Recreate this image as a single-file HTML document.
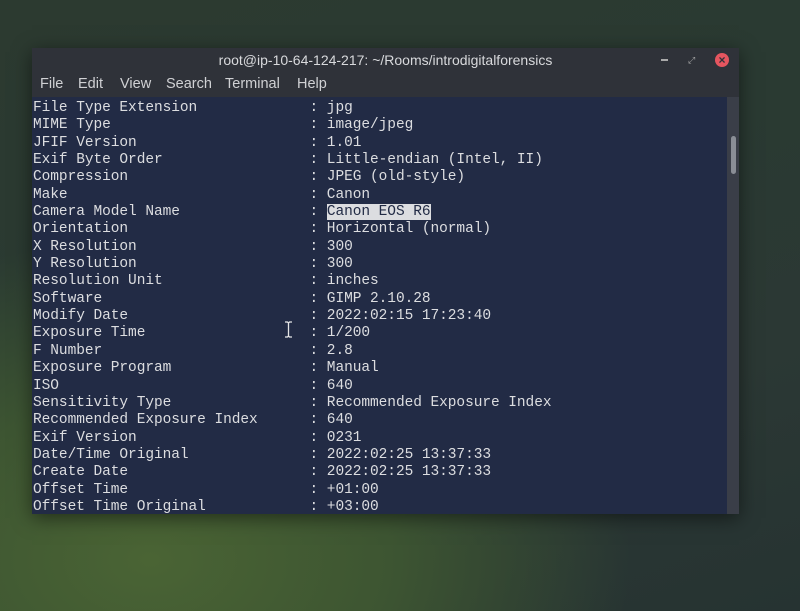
<!DOCTYPE html>
<html><head><style>
html,body{margin:0;padding:0;width:800px;height:611px;overflow:hidden}
body{background:radial-gradient(ellipse 600px 400px at 150px 560px,#4a6434 0%,#3d5532 40%,transparent 80%),linear-gradient(160deg,#2c3a30 0%,#2a3a32 40%,#2b3834 70%,#263332 100%);position:relative;font-family:"Liberation Sans",sans-serif}
.win{position:absolute;left:32px;top:48px;width:707px;height:466px;background:#2f3239;box-shadow:0 4px 18px rgba(0,0,0,.5)}
.title{position:absolute;left:0;right:0;top:4px;text-align:center;color:#d8d9dc;font-size:14px}
.menu{position:absolute;left:8px;top:28px;color:#d0d1d4;font-size:14.5px}
.menu span{position:absolute;top:0}
.term{position:absolute;left:0;top:49px;width:695px;height:417px;background:#222b45;overflow:hidden}
pre{margin:0;position:absolute;left:1px;top:3px;font-family:"Liberation Mono",monospace;font-size:14.5px;letter-spacing:-0.06px;line-height:17.35px;color:#dcdde0}
.sel{background:#dcdde0;color:#222b45}
.sb{position:absolute;left:695px;top:49px;width:12px;height:417px;background:#3a3e48}
.th{position:absolute;left:4px;top:39px;width:5px;height:38px;border-radius:3px;background:#8a8e96}
.x{position:absolute;left:683px;top:5px;width:14px;height:14px;border-radius:7px;background:#e5555f;color:#2f3239;font-size:12px;line-height:14px;text-align:center;font-weight:bold}
.min{position:absolute;left:629px;top:11px;width:7px;height:2px;background:#aaa}
.max{position:absolute;left:656px;top:7px;color:#aaa;font-size:9px}
.cur{position:absolute;left:284px;top:321px}
</style></head><body>
<div class="win">
<div class="title">root@ip-10-64-124-217: ~/Rooms/introdigitalforensics</div>
<div class="min"></div><div class="max">⤢</div><div class="x">×</div>
<div class="menu"><span style="left:0">File</span><span style="left:38px">Edit</span><span style="left:80px">View</span><span style="left:126px">Search</span><span style="left:185px">Terminal</span><span style="left:257px">Help</span></div>
<div class="term"><pre>File Type Extension             : jpg
MIME Type                       : image/jpeg
JFIF Version                    : 1.01
Exif Byte Order                 : Little-endian (Intel, II)
Compression                     : JPEG (old-style)
Make                            : Canon
Camera Model Name               : <span class="sel">Canon EOS R6</span>
Orientation                     : Horizontal (normal)
X Resolution                    : 300
Y Resolution                    : 300
Resolution Unit                 : inches
Software                        : GIMP 2.10.28
Modify Date                     : 2022:02:15 17:23:40
Exposure Time                   : 1/200
F Number                        : 2.8
Exposure Program                : Manual
ISO                             : 640
Sensitivity Type                : Recommended Exposure Index
Recommended Exposure Index      : 640
Exif Version                    : 0231
Date/Time Original              : 2022:02:25 13:37:33
Create Date                     : 2022:02:25 13:37:33
Offset Time                     : +01:00
Offset Time Original            : +03:00</pre></div>
<div class="sb"><div class="th"></div></div>
</div>
<svg class="cur" width="9" height="17" viewBox="0 0 9 17"><path d="M1 1h2.5l1 1 1-1H8M4.5 2v13M1 16h2.5l1-1 1 1H8" stroke="#e6e6e6" stroke-width="1.3" fill="none"/></svg>
</body></html>
